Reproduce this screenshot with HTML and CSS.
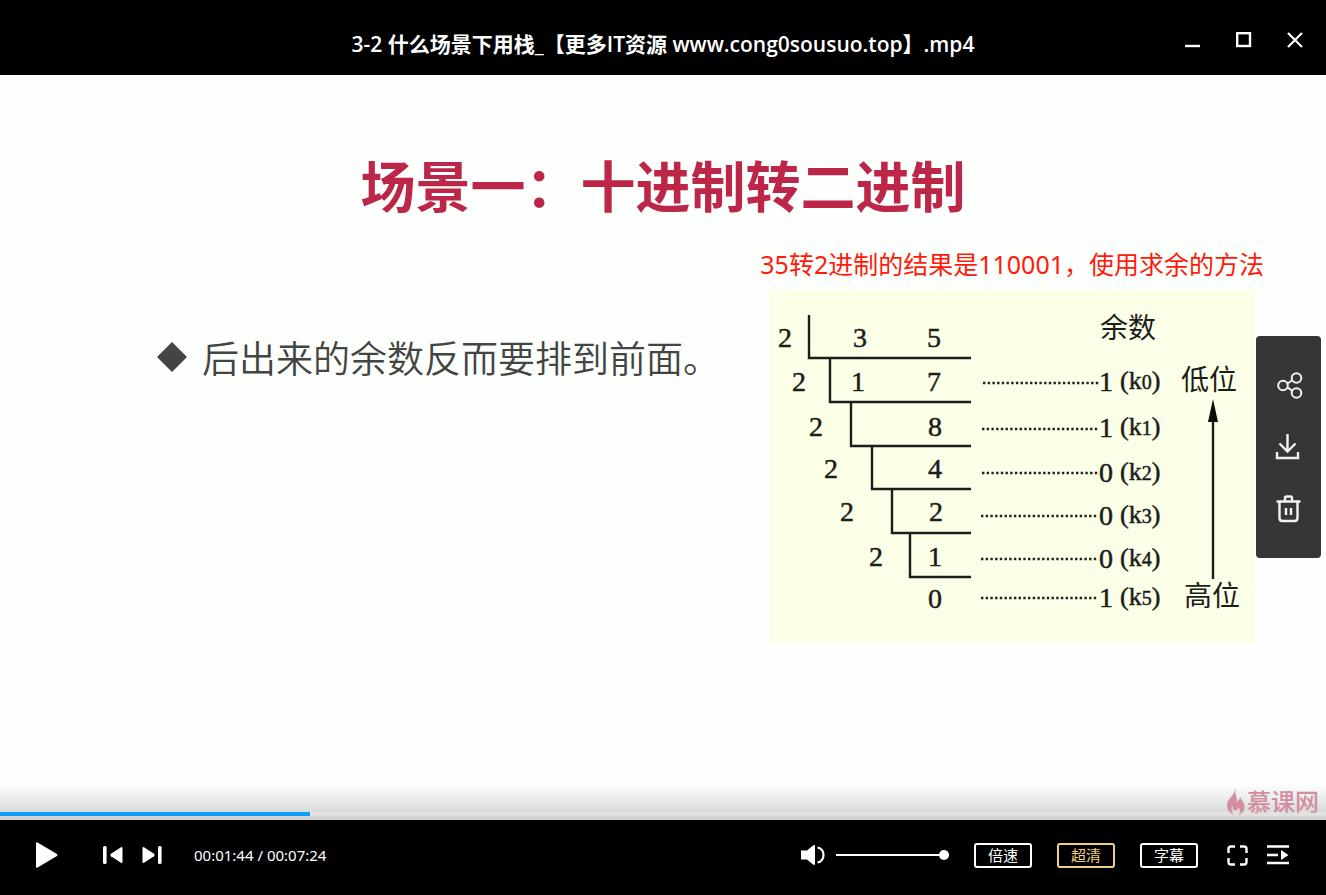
FILE: index.html
```
<!DOCTYPE html>
<html lang="zh-CN">
<head>
<meta charset="utf-8">
<title>3-2 什么场景下用栈</title>
<link rel="stylesheet" href="styles.css">
</head>
<body>
<div class="player">
  <header class="titlebar">
    <h1 class="file-name">3-2 什么场景下用栈_【更多IT资源 www.cong0sousuo.top】.mp4</h1>
    <div class="window-controls">
      <button class="icon-button" type="button" aria-label="最小化"><svg width="16" height="16"><path d="M0 14h15" stroke="#fff" stroke-width="2.4"/></svg></button>
      <button class="icon-button" type="button" aria-label="最大化"><svg width="16" height="16"><rect x="1.2" y="1.2" width="12.8" height="12.8" fill="none" stroke="#fff" stroke-width="2.4"/></svg></button>
      <button class="icon-button" type="button" aria-label="关闭"><svg width="16" height="16"><path d="M1 1l14 14M15 1L1 15" stroke="#fff" stroke-width="2.2"/></svg></button>
    </div>
  </header>

  <main class="stage">
    <h2 class="slide-title">场景一：十进制转二进制</h2>
    <div class="slide-body">
      <ul class="points">
        <li class="point"><svg class="diamond" width="30" height="30"><path d="M15 0l15 15-15 15L0 15z" fill="#424542"/></svg><span>后出来的余数反而要排到前面。</span></li>
      </ul>
      <figure class="figure">
        <figcaption class="note">35转2进制的结果是110001，使用求余的方法</figcaption>
        <svg class="division" viewBox="0 0 486 353" width="486" height="353" role="img" aria-label="短除法">
          <rect width="486" height="353" fill="#fcffe8"/>
          <g fill="none" stroke="#1c1d19" stroke-width="2.4">
            <path d="M40 25V68H202"/>
            <path d="M61 68V112H202"/>
            <path d="M82 112V156H202"/>
            <path d="M103 156V199H202"/>
            <path d="M123 199V243H202"/>
            <path d="M141 243V287H202"/>
          </g>
          <g class="digits">
            <text x="16" y="57">2</text><text x="91" y="57">3</text><text x="165" y="57">5</text>
            <text x="30" y="101">2</text><text x="89" y="101">1</text><text x="165" y="101">7</text>
            <text x="47" y="146">2</text><text x="166" y="146">8</text>
            <text x="62" y="188">2</text><text x="166" y="188">4</text>
            <text x="78" y="231">2</text><text x="167" y="231">2</text>
            <text x="107" y="276">2</text><text x="166" y="276">1</text>
            <text x="166" y="318">0</text>
          </g>
          <g stroke="#22231f" stroke-width="2.4" stroke-dasharray="2.4 2.3">
            <path d="M214 93H330"/><path d="M213 139H330"/><path d="M213 183H330"/>
            <path d="M212 226H329"/><path d="M212 269H329"/><path d="M212 308H329"/>
          </g>
          <g class="digits">
            <text x="337" y="101">1</text><text x="337" y="147">1</text><text x="337" y="192">0</text>
            <text x="337" y="235">0</text><text x="337" y="278">0</text><text x="337" y="317">1</text>
          </g>
          <g class="terms">
            <text x="351" y="99">(k<tspan class="sub">0</tspan>)</text>
            <text x="351" y="145">(k<tspan class="sub">1</tspan>)</text>
            <text x="351" y="190">(k<tspan class="sub">2</tspan>)</text>
            <text x="351" y="233">(k<tspan class="sub">3</tspan>)</text>
            <text x="351" y="276">(k<tspan class="sub">4</tspan>)</text>
            <text x="351" y="315">(k<tspan class="sub">5</tspan>)</text>
          </g>
          <g class="labels">
            <text x="331" y="48">余数</text>
            <text x="412" y="100">低位</text>
            <text x="415" y="316">高位</text>
          </g>
          <path d="M444 130V289" stroke="#1c1d19" stroke-width="2.4"/>
          <path d="M444 109l5 23h-10z" fill="#0c0c0a"/>
        </svg>
      </figure>
    </div>

    <div class="side-tools">
      <button class="icon-button" type="button" aria-label="分享"><svg width="28" height="28" fill="none" stroke="#f2f2f2" stroke-width="2"><circle cx="8" cy="14.500" r="4.800"/><circle cx="21.500" cy="7" r="4.800"/><circle cx="21.500" cy="22" r="4.800"/><path d="M12 12.500q3-1 5-3.500M12 16.500q3 1 5 3.500"/></svg></button>
      <button class="icon-button" type="button" aria-label="下载"><svg width="28" height="28" fill="none" stroke="#f2f2f2" stroke-width="2.400"><path d="M12.500 1v17M4.500 10.500l8 8 8-8M2 19v6h21v-6"/></svg></button>
      <button class="icon-button" type="button" aria-label="删除"><svg width="28" height="28" fill="none" stroke="#f2f2f2" stroke-width="2.400"><path d="M1.500 6.500h24M10 6V3q0-1.500 1.500-1.500h4Q17 1.500 17 3v3M4.500 7v16q0 3 3 3h12q3 0 3-3V7M11 13v7M16 13v7"/></svg></button>
    </div>

    <div class="bottom-shade"></div>
    <div class="watermark">
      <svg width="18" height="28" viewBox="0 0 18 28"><path d="M8.500 0C9 3 8 5 9 8c1 2 1 4 .5 6 2-1 3-3 4-5 0 3 4 5 4 10 0 5-3 7-6 8.500 2-3 2-6 0-8-1 2-2 3-4 3-2-1-2-3-2-5-2 3-1 6 2 9.500C3 26 0 22 0 17 0 10 8 8 8.500 0z" fill="#d28da0"/></svg>
      <span>慕课网</span>
    </div>
    <input class="seek" type="range" min="0" max="444" value="104" aria-label="播放进度" style="--played: 23.4%">
  </main>

  <footer class="controls">
    <div class="transport">
      <button class="icon-button play" type="button" aria-label="播放"><svg width="22" height="26"><path d="M0 1.500Q0-.5 2 .8L21 12q1 1 0 2L2 25.200q-2 1.300-2-.7z" fill="#fff"/></svg></button>
      <div class="skip">
        <button class="icon-button" type="button" aria-label="上一个"><svg width="20" height="18" fill="#fff"><rect width="3.600" height="18" rx="1.500"/><path d="M19.500 2v14q0 1.500-1.500.8L8 10.200q-1.500-1.200 0-2.400L18 1.200q1.500-.7 1.500.8z"/></svg></button>
        <button class="icon-button" type="button" aria-label="下一个"><svg width="20" height="18" fill="#fff"><rect x="16" width="3.600" height="18" rx="1.500"/><path d="M.5 2v14q0 1.500 1.500.8l10-6.600q1.500-1.200 0-2.400L2 1.200Q.5.5.5 2z"/></svg></button>
      </div>
      <span class="time">00:01:44 / 00:07:24</span>
    </div>
    <div class="options">
      <div class="volume">
        <button class="icon-button" type="button" aria-label="静音"><svg width="25" height="20"><path d="M1 5.500h6L13 .5q2-1 2 .5v18q0 1.500-2 .5l-6-5H1z" fill="#fff"/><path d="M17.500 2.500c8 1.500 8 13.500 0 15" fill="none" stroke="#fff" stroke-width="2.200"/></svg></button>
        <input class="level" type="range" min="0" max="100" value="100" aria-label="音量">
      </div>
      <button class="chip" type="button">倍速</button>
      <button class="chip gold" type="button">超清</button>
      <button class="chip" type="button">字幕</button>
      <div class="view">
        <button class="icon-button" type="button" aria-label="全屏"><svg width="21" height="21" fill="none" stroke="#fff" stroke-width="2.400"><path d="M1.500 8V4q0-2.500 2.500-2.500h4M13 1.500h4q2.500 0 2.500 2.500v4M19.500 13v4q0 2.500-2.500 2.500h-4M8 19.500H4q-2.500 0-2.500-2.500v-4"/></svg></button>
        <button class="icon-button" type="button" aria-label="播放列表"><svg width="22" height="20"><path d="M0 1.500h22M0 10h11M0 18h22" stroke="#fff" stroke-width="2.400"/><path d="M14 5l7.500 5-7.500 5z" fill="#fff"/></svg></button>
      </div>
    </div>
  </footer>
</div>
</body>
</html>
```
FILE: styles.css
```
* {
  box-sizing: border-box;
}

body {
  margin: 0;
  background: #000;
  font-family: "Noto Sans", "Noto Sans CJK SC", sans-serif;
}

.player {
  display: flex;
  flex-direction: column;
  min-height: 100vh;
}

.icon-button {
  display: flex;
  padding: 0;
  border: 0;
  background: none;
}

/* Title bar */
.titlebar {
  display: grid;
  grid-template-columns: 1fr auto 1fr;
  padding: 32px 23px 0;
  height: 75px;
  background: #000;
  color: #fff;
}

.file-name {
  grid-column: 2;
  margin: 0;
  font-family: "Open Sans", "Noto Sans CJK SC", sans-serif;
  font-size: 21px;
  line-height: 24px;
  font-weight: 600;
  white-space: nowrap;
}

.window-controls {
  display: flex;
  justify-content: flex-end;
  align-items: flex-start;
  gap: 35px;
}

/* Slide */
.stage {
  position: relative;
  flex: 1;
  background: #fdfffc;
}

.slide-title {
  margin: 0;
  padding-top: 72px;
  color: #bb2649;
  font-family: "Noto Sans CJK SC", sans-serif;
  font-size: 55px;
  line-height: 72px;
  font-weight: 700;
  text-align: center;
}

.slide-body {
  display: flex;
  justify-content: space-between;
  padding: 28px 62px 0 157px;
}

.points {
  margin: 0;
  padding: 82px 0 0;
  list-style: none;
}

.point {
  display: flex;
  align-items: center;
  gap: 15px;
  color: #424542;
  font-family: "Noto Sans CJK SC", sans-serif;
  font-size: 37px;
  line-height: 56px;
  font-weight: 350;
  white-space: nowrap;
}

.figure {
  display: flex;
  flex-direction: column;
  align-items: center;
  gap: 9px;
  margin: 0;
}

.note {
  color: #ff1a0c;
  font-size: 25px;
  line-height: 34px;
  white-space: nowrap;
}

.division {
  display: block;
  font-family: "Liberation Serif", "Noto Sans CJK SC", serif;
  fill: #1c1d19;
}

.digits {
  font-size: 28px;
  text-anchor: middle;
  stroke: #1c1d19;
  stroke-width: 0.5px;
}

.terms {
  font-size: 26px;
  stroke: #1c1d19;
  stroke-width: 0.5px;
}

.sub {
  font-size: 20px;
}

.labels {
  font-size: 28px;
}

/* Overlays on the picture */
.side-tools {
  position: absolute;
  top: 261px;
  right: 5px;
  display: flex;
  flex-direction: column;
  align-items: center;
  gap: 34px;
  width: 65px;
  padding: 35px 0;
  border-radius: 4px;
  background: #363636;
}

.bottom-shade {
  position: absolute;
  right: 0;
  bottom: 0;
  left: 0;
  height: 36px;
  background: linear-gradient(rgba(0, 0, 0, 0), rgba(0, 0, 0, 0.18));
}

.watermark {
  position: absolute;
  right: 7px;
  bottom: 3px;
  display: flex;
  align-items: center;
  gap: 2px;
  color: #d28da0;
  font-size: 24px;
  line-height: 30px;
  font-weight: 500;
}

.seek {
  position: absolute;
  bottom: 4px;
  left: 0;
  width: 100%;
  height: 4px;
  margin: 0;
  appearance: none;
  background: linear-gradient(to right, #0c9ff8 var(--played), rgba(255, 255, 255, 0.25) var(--played));
}

.seek::-webkit-slider-thumb {
  appearance: none;
  width: 0;
  height: 0;
}

/* Control bar */
.controls {
  display: flex;
  align-items: center;
  justify-content: space-between;
  height: 75px;
  padding: 0 37px 5px 36px;
  background: #000;
  color: #fff;
}

.transport {
  display: flex;
  align-items: center;
}

.skip {
  display: flex;
  gap: 19px;
  margin: 0 32px 0 45px;
}

.time {
  font-size: 15px;
  line-height: 20px;
}

.options {
  display: flex;
  align-items: center;
  gap: 25px;
}

.volume {
  display: flex;
  align-items: center;
  gap: 11px;
}

.level {
  width: 113px;
  height: 10px;
  margin: 0;
  appearance: none;
  background: linear-gradient(#fff, #fff) center / 100% 2px no-repeat;
}

.level::-webkit-slider-thumb {
  appearance: none;
  width: 10px;
  height: 10px;
  border-radius: 50%;
  background: #fff;
}

.chip {
  width: 58px;
  height: 25px;
  padding: 0;
  border: 2px solid #fff;
  border-radius: 3px;
  background: #000;
  color: #fff;
  font-family: "Noto Sans CJK SC", sans-serif;
  font-size: 15px;
  line-height: 20px;
}

.gold {
  border-color: #f2ce85;
  color: #f2ce85;
}

.view {
  display: flex;
  align-items: center;
  gap: 19px;
  margin-left: 4px;
}
```
